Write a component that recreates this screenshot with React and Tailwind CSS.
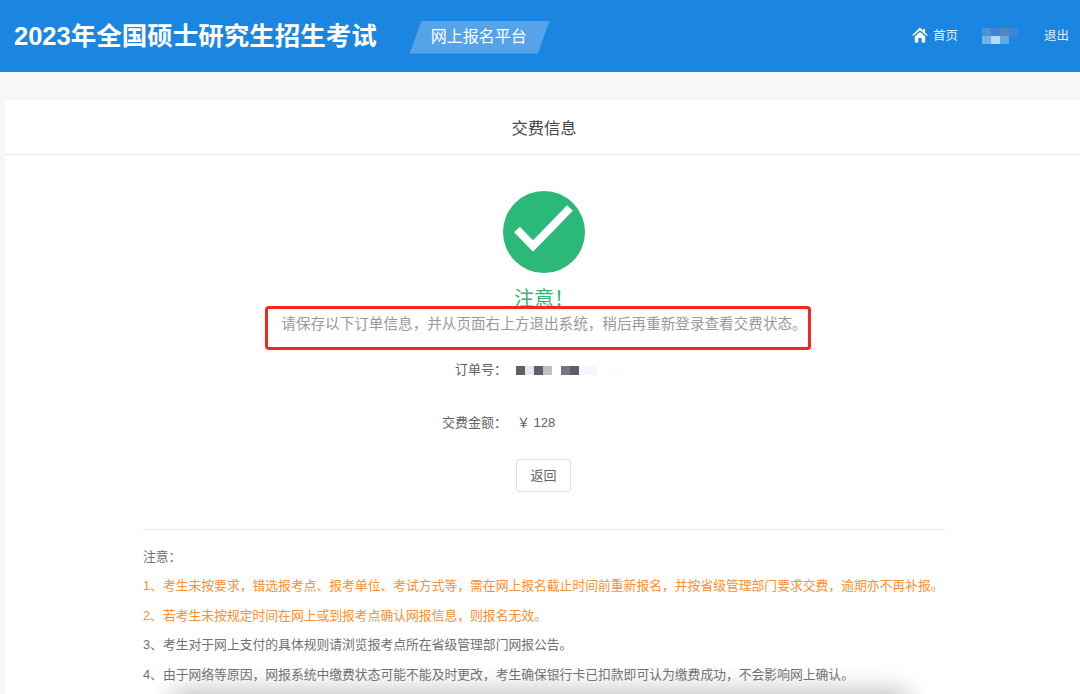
const font = { fontFamily: '"Liberation Sans", "Noto Sans CJK SC", sans-serif' };

const notes = [
  { text: '注意：', cls: 'text-[#707070]' },
  { text: '1、考生未按要求，错选报考点、报考单位、考试方式等，需在网上报名截止时间前重新报名，并按省级管理部门要求交费，逾期亦不再补报。', cls: 'text-[#fa8f30]' },
  { text: '2、若考生未按规定时间在网上或到报考点确认网报信息，则报名无效。', cls: 'text-[#fa8f30]' },
  { text: '3、考生对于网上支付的具体规则请浏览报考点所在省级管理部门网报公告。', cls: 'text-[#707070]' },
  { text: '4、由于网络等原因，网报系统中缴费状态可能不能及时更改，考生确保银行卡已扣款即可认为缴费成功，不会影响网上确认。', cls: 'text-[#707070]' },
];

// 打码的用户名
const NameMosaic = () => (
  <div className="grid grid-cols-[9px_9px_9px_9px] grid-rows-[8px_8px] w-[36px] blur-[0.6px]">
    <div className="bg-[#4a94d6]" />
    <div className="bg-[#3f83d6]" />
    <div className="bg-[#5488b8]" />
    <div className="bg-[#3f83d6]" />
    <div className="bg-[#74b2e6]" />
    <div className="bg-[#aedcff]" />
    <div className="bg-[#62a8e2]" />
    <div className="bg-[#1d86e0]" />
  </div>
);

// 打码的订单号
const OrderMosaic = () => (
  <div className="flex h-[9px] w-[110px] blur-[0.4px]">
    <div className="w-[9px] bg-[#5f5f68]" />
    <div className="w-[9px] bg-[#e6e7ee]" />
    <div className="w-[9px] bg-[#5f5f68]" />
    <div className="w-[9px] bg-[#bfc0cc]" />
    <div className="w-[9px] bg-white" />
    <div className="w-[9px] bg-[#777780]" />
    <div className="w-[9px] bg-[#5f5f68]" />
    <div className="w-[18px] bg-[#f6f7fe]" />
    <div className="w-[9px] bg-white" />
    <div className="w-[18px] bg-[#fbfdf8]" />
  </div>
);

const App = () => {
  return (
    <div className="relative h-[694px] w-[1080px] overflow-hidden bg-[#f7f7f7]" style={font}>
      <header className="flex h-[72px] items-center bg-[#1a86e2] text-white">
        <h1 className="mt-[2px] ml-[14px] text-[25.500px] leading-none font-bold whitespace-nowrap">2023年全国硕士研究生招生考试</h1>
        <div className="mt-[2px] ml-[33px] flex h-[33px] w-[140px] items-center justify-center bg-[#57a3e9] pr-[2px] text-[16px] [clip-path:polygon(8.500%_0,100%_0,91.500%_100%,0_100%)]">
          网上报名平台
        </div>
        <nav className="ml-auto flex items-center text-[12.500px] text-[#e4f1fc]">
          <svg viewBox="0 0 16 16" className="mb-[2px] h-[16px] w-[16px] text-white" fill="currentColor">
            <path d="M8 0.500 0.300 8 1.200 9 8 3.200 14.800 9 15.700 8 13 5.400V2h-2v1.500z" />
            <path d="M2.800 9.400 8 5l5.200 4.400V15.500H9.700V11H6.300v4.500H2.800z" />
          </svg>
          <span className="ml-[5px]">首页</span>
          <div className="ml-[24px]"><NameMosaic /></div>
          <span className="mr-[11px] ml-[26px]">退出</span>
        </nav>
      </header>

      <main className="mt-[28px] ml-[5px] h-[600px] w-[1078px] bg-white">
        <div className="flex h-[55px] items-center justify-center border-b border-[#e8e8e8] pt-[2px] text-[16.300px] text-[#444444]">
          交费信息
        </div>

        <div className="flex flex-col items-center pt-[36px]">
          <div className="flex h-[82px] w-[82px] items-center justify-center rounded-full bg-[#2bb878]">
            <svg viewBox="0 0 82 82" className="h-[82px] w-[82px]" fill="none" stroke="white" strokeWidth="8">
              <path d="M14 38.500 30 55 67 17" />
            </svg>
          </div>
          <div className="mt-[14px] text-[20px] leading-[24px] text-[#2bb878]">注意！</div>
          <div className="mt-[2px] text-[14.600px] leading-[22px] whitespace-nowrap text-[#999999]">
            请保存以下订单信息，并从页面右上方退出系统，稍后再重新登录查看交费状态。
          </div>

          <div className="mt-[25px] flex h-[20px] items-center self-start text-[13px] text-[#606266]">
            <span className="w-[502px] text-right">订单号：</span>
            <div className="ml-[9px]"><OrderMosaic /></div>
          </div>
          <div className="mt-[33px] flex h-[20px] items-center self-start text-[13px] text-[#606266]">
            <span className="w-[502px] text-right">交费金额：</span>
            <span className="ml-[10px]">￥ 128</span>
          </div>

          <button className="mt-[26px] mr-[1px] h-[33px] w-[55px] rounded-[3px] border border-[#dcdfe6] bg-white text-[13px] text-[#606266]">
            返回
          </button>
        </div>

        <section className="mx-[138px] mt-[37px] w-[802px] border-t border-[#e8e8e8] pt-[12px]">
          {notes.map((note) => (
            <p key={note.text} className={`text-[12.800px] leading-[29.400px] whitespace-nowrap ${note.cls}`}>{note.text}</p>
          ))}
        </section>
      </main>

      {/* 红框标注 */}
      <div className="absolute top-[306px] left-[265px] h-[44px] w-[546px] rounded-[4px] border-[3px] border-[#f5281c]" />
      {/* 底部阴影 */}
      <div className="absolute top-[691px] left-[170px] h-[24px] w-[740px] rounded-full bg-[#8a8a8a] opacity-60 blur-[12px]" />
    </div>
  );
};

export default App;
